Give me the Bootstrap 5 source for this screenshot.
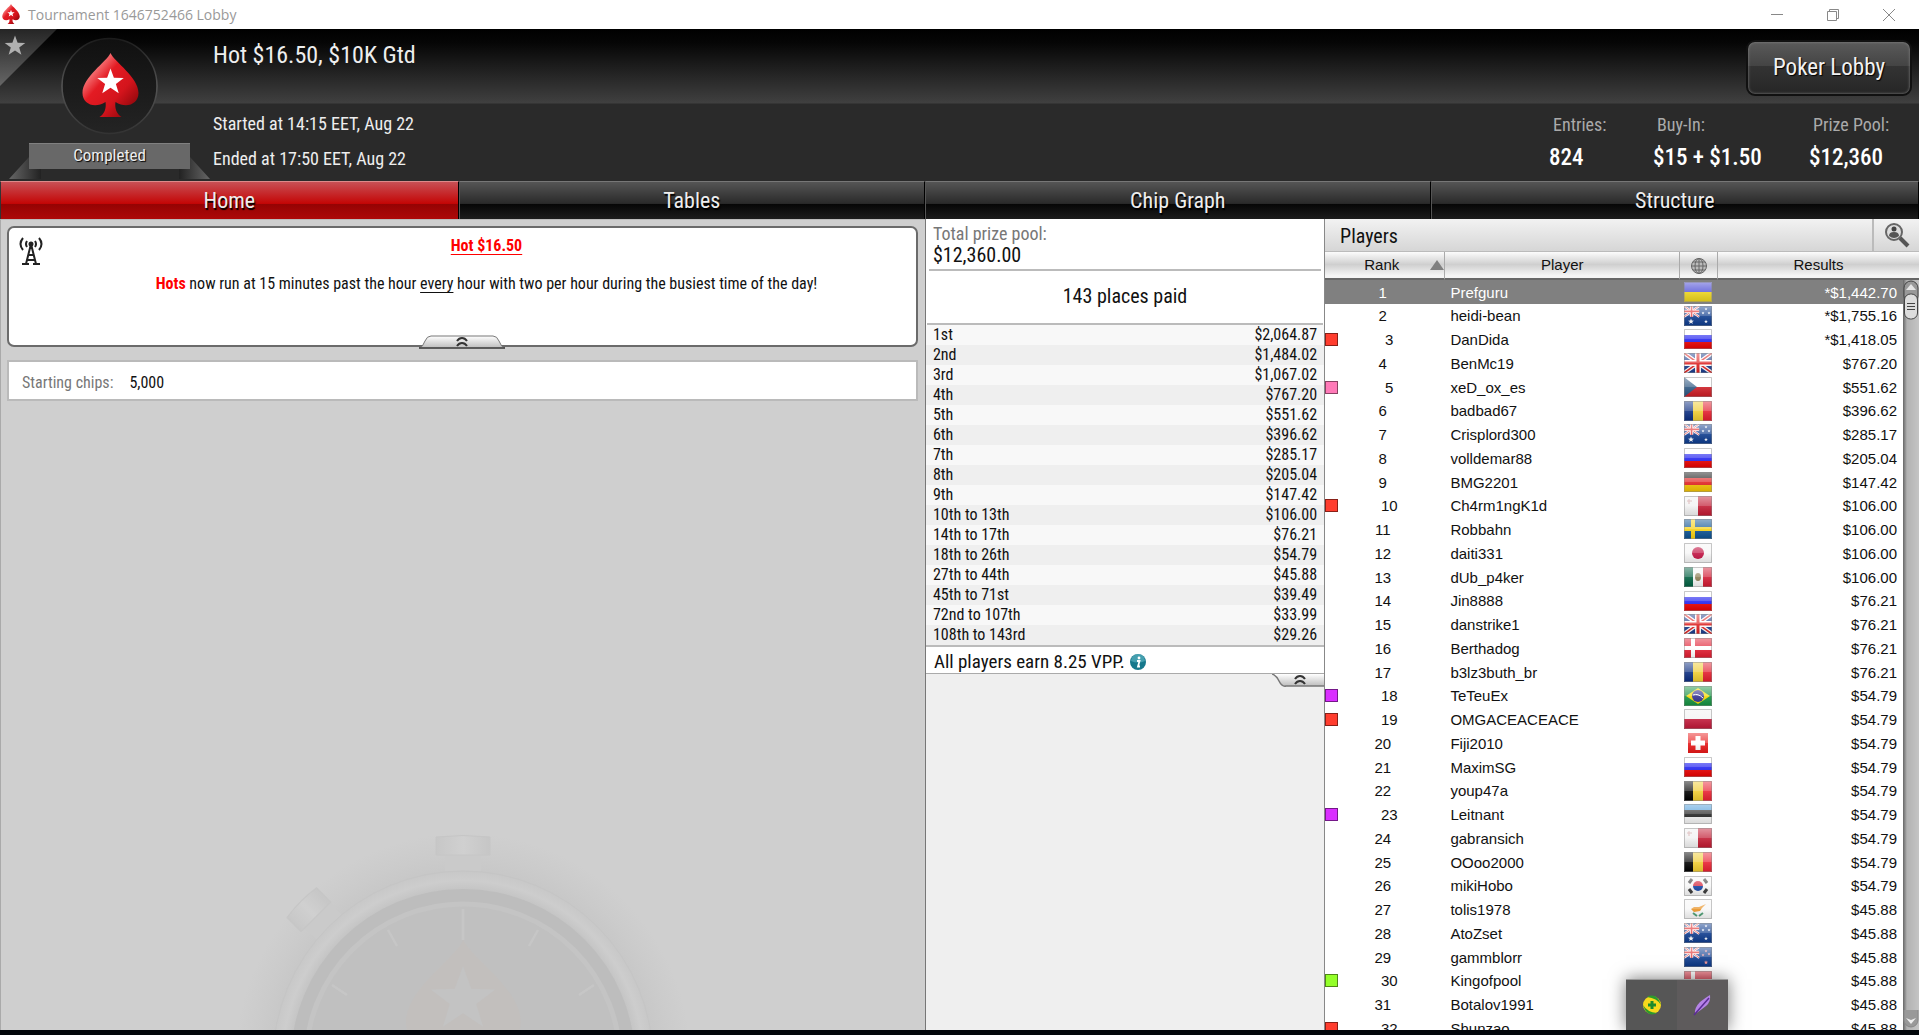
<!DOCTYPE html>
<html lang="en">
<head>
<meta charset="utf-8">
<meta name="viewport" content="width=device-width, initial-scale=1">
<title>Tournament 1646752466 Lobby</title>
<link rel="stylesheet" href="https://cdn.jsdelivr.net/npm/bootstrap@5.3.0/dist/css/bootstrap.min.css">
<style>
  :root { --narrow: "Roboto Condensed", "Liberation Sans Narrow", "DejaVu Sans Condensed", sans-serif; }
  body { font-family: var(--narrow); background: #000; color: #111; line-height: 20px; }
  a { color: inherit; text-decoration: none; }
  /* window title bar */
  .titlebar { height: 29px; background: #fff; font: 14px/29px "Open Sans", sans-serif; color: #999; padding: 0 2px; }
  .titlebar button { width: 56px; height: 29px; background: none; border: 0; padding: 0; display: flex; align-items: center; justify-content: center; }
  /* tournament header */
  .lobby-head { height: 152px; background: linear-gradient(#000 0, #060606 14px, #404040 74px, #2a2a2a 75px, #2a2a2a 100%); color: #eee; }
  .emblem { width: 213px; }
  .ribbon-text { left: 29px; top: 113px; width: 161px; font-size: 17px; line-height: 26px; text-shadow: 1px 1px 1px #000; }
  .t-title { font-size: 24px; line-height: 30px; padding-top: 11px; }
  .t-times { font-size: 18px; line-height: 35px; padding-top: 36px; }
  .lobby-btn { width: 166px; height: 56px; margin: 11px 7px 0 0; border: 2px solid #111; border-radius: 9px; color: #f2f2f2; font-size: 23px; text-shadow: 1px 1px 1px #000;
    background: linear-gradient(#5a5a5a 0, #444 46%, #333 47%, #262626 100%); box-shadow: inset 0 0 3px #888; }
  .facts { display: grid; grid-template-columns: 104px 156px 110px; font-size: 18px; line-height: 33px; padding-top: 12px; }
  .facts dt { font-weight: 400; color: #aaa; padding-left: 4px; }
  .facts dd { margin: 0; color: #fff; font-size: 23px; font-weight: 500; }
  /* tabs */
  .tabs { height: 38px; }
  .tabs a { text-align: center; font-size: 22px; line-height: 38px; color: #eee; text-shadow: 1px 2px 1px #000; border-left: 1px solid #555; border-top: 1px solid #777;
    background: linear-gradient(#555 0, #2a2a2a 58%, #060606 60%, #1c1c1c 100%); border-right: 1px solid #000; }
  .tabs a.active { background: linear-gradient(#c85055 0, #c40606 58%, #950303 60%, #ad0808 100%); border-top-color: #dd8a8a; border-left-color: #333; }
  .w-left { width: 48.2%; } .w-mid { width: 20.85%; }
  .tab-a { width: 23.9%; } .tab-b { width: 24.3%; } .tab-c { width: 26.35%; }
  /* left pane */
  .pane-left { background: #cfcfcf; border-left: 1px solid #aaa; border-top: 1px solid #bbb; padding: 6px 7px 6px 6px; overflow: hidden; }
  .news { height: 121px; background: #fff; border: 2px solid #6b6b6b; border-radius: 7px; font-size: 16px; }
  .news .copy { padding: 8px 0 0 48px; text-align: center; }
  .news .copy p { margin: 0 0 18px; }
  .hot { color: #f00; font-weight: 700; }
  .hot-u, .ev { text-decoration: underline; text-underline-offset: 3px; }
  .pull { border: 0; padding: 0; background: none; display: block; line-height: 0; }
  .news .pull { left: 50%; bottom: -4px; margin-left: -44px; }
  .chips { height: 41px; margin-top: 13px; border: 2px solid #bababa; background: #fff; font-size: 16px; padding: 5px 13px 0; color: #777; }
  .chips span { color: #111; }
  .watch { left: 50%; bottom: 0; margin-left: -230px; }
  /* prize pane */
  .pane-mid { background: #efefef; border-left: 1px solid #777; border-right: 1px solid #888; }
  .prize { background: #fff; border-bottom: 1px solid #aaa; }
  .pool { padding: 5px 4px 3px; font-size: 18px; color: #777; margin: 0 3px; border-bottom: 2px solid #bbb; line-height: 20px; }
  .pool strong { display: block; font-weight: 400; font-size: 20px; color: #111; line-height: 22px; }
  .paid { height: 54px; line-height: 51px; font-size: 20px; text-align: center; margin: 0 1px; border-bottom: 2px solid #bbb; }
  .pay-table { width: 100%; border-bottom: 2px solid #bbb; border-collapse: separate; border-spacing: 0; font-size: 16px; }
  .pay-table th, .pay-table td { height: 20px; line-height: 20px; padding: 0 7px; font-weight: 400; }
  .pay-table tr { background: #f8f8f8; }
  .pay-table tr:nth-child(even) { background: #efefef; }
  .vpp { height: 26px; font-size: 19px; line-height: 29px; padding-left: 8px; }
  .vpp svg { margin: 6px 0 0 4px; }
  /* players pane */
  .pane-right { width: 0; background: #fff; overflow: hidden; }
  .players-bar { height: 33px; background: linear-gradient(#f2f2f2, #d6d6d6); border-bottom: 1px solid #bbb; }
  .players-bar h2 { font: 20px/34px var(--narrow); padding-left: 15px; margin: 0; }
  .find { width: 47px; border: 0; border-left: 2px solid #bbb; background: none; padding: 0; }
  .list { width: 100%; table-layout: fixed; border-collapse: separate; border-spacing: 0; font-family: "Liberation Sans", sans-serif; font-size: 15px; }
  .list th { height: 28px; padding: 0; font-weight: 400; text-align: center; border-left: 1px solid #aaa; border-bottom: 2px solid #666;
    background: linear-gradient(#fcfcfc 0, #cfcfcf 48%, #f4f4f4 90%); }
  .list th:first-child { border-left: 0; }
  .list td { padding: 0; height: 24px; line-height: 23px; overflow: hidden; white-space: nowrap; }
  .list tr:nth-child(4n+2) td { height: 23px; }
  .list td:nth-child(1) { padding-right: 4px; }
  .list td:nth-child(2) { padding-left: 6px; }
  .list td:nth-child(3) { text-align: center; line-height: 0; }
  .list td:nth-child(4) { text-align: right; padding-right: 22px; }
  .list .picked td { background: #808080; color: #fff; }
  .tag { width: 13px; height: 13px; border: 1px solid #0007; }
  .scroll { top: 61px; right: 0; bottom: 0; width: 16px; background: linear-gradient(90deg, #666 0, #b2b2b2 25%, #c4c4c4 100%); }
  /* floating tray */
  .tray { right: 191px; bottom: 5px; width: 102px; height: 51px; background: #565656; border-top: 1px solid #999; box-shadow: 0 0 16px #0008; }
  .tray span:last-child { background: #5e5b5c; }
  .base { height: 5px; background: #02060a; }
</style>
<script src="https://cdn.jsdelivr.net/npm/bootstrap@5.3.0/dist/js/bootstrap.bundle.min.js"></script>
</head>
<body class="vh-100 overflow-hidden d-flex flex-column">

<svg width="0" height="0" class="position-absolute" aria-hidden="true">
  <defs>
    <linearGradient id="red" x1="0" y1="0" x2="1" y2="1"><stop offset=".15" stop-color="#ffa0a0"/><stop offset=".4" stop-color="#e31b23"/><stop offset=".65" stop-color="#d4141c"/><stop offset=".95" stop-color="#7d0408"/></linearGradient>
    <linearGradient id="gloss" x1="0" y1="0" x2="0" y2="1"><stop offset="0" stop-color="#fff" stop-opacity=".55"/><stop offset=".48" stop-color="#fff" stop-opacity=".3"/><stop offset=".52" stop-color="#fff" stop-opacity=".12"/><stop offset="1" stop-color="#000" stop-opacity=".1"/></linearGradient>
    <linearGradient id="tabg" x1="0" y1="0" x2="0" y2="1"><stop offset="0" stop-color="#fff"/><stop offset="1" stop-color="#bcbcbc"/></linearGradient>
    <g id="spade"><path d="M28 0C32 9 56 24 56 40C56 51 44 56 33 49C32 55 34 61 39 64H17C22 61 24 55 23 49C12 56 0 51 0 40C0 24 24 9 28 0Z"/></g>
    <path id="star" d="M0-10 2.5-3.1 9.8-2.9 4 1.5 6.1 8.4 0 4.3-6.1 8.4-4 1.5-9.8-2.9-2.5-3.1Z"/>
    <g id="chev" fill="none" stroke="#333" stroke-width="2"><path d="M-5-1Q-3-4 0-4T5-1M-5 4Q-3 1 0 1T5 4"/></g>
    <g id="jack"><path fill="#1a3c8c" d="M0 0h28v20H0z"/><path stroke="#fff" stroke-width="4" d="M0 0 28 20M28 0 0 20"/><path stroke="#d22" stroke-width="1.5" d="M0 0 28 20M28 0 0 20"/><path stroke="#fff" stroke-width="6" d="M14 0v20M0 10h28"/><path stroke="#d22" stroke-width="3" d="M14 0v20M0 10h28"/></g>
    <g id="f-ua"><path fill="#3a3ad0" d="M0 0h28v10H0z"/><path fill="#ead21c" d="M0 10h28v10H0z"/></g>
    <g id="f-ru"><path fill="#fff" d="M0 0h28v7H0z"/><path fill="#2222f0" d="M0 6h28v8H0z"/><path fill="#e80000" d="M0 13h28v7H0z"/></g>
    <g id="f-au"><path fill="#0c3a8c" d="M0 0h28v20H0z"/><use href="#jack" transform="scale(.54)"/><g fill="#fff"><use href="#star" transform="translate(7 15.500) scale(.3)"/><use href="#star" transform="translate(22 15.500) scale(.2)"/><use href="#star" transform="translate(22 3) scale(.15)"/><use href="#star" transform="translate(19 7) scale(.15)"/><use href="#star" transform="translate(25 7) scale(.15)"/></g></g>
    <g id="f-nz"><path fill="#0c3a8c" d="M0 0h28v20H0z"/><use href="#jack" transform="scale(.54)"/><g fill="#f99"><use href="#star" transform="translate(22 15.500) scale(.22)"/><use href="#star" transform="translate(22 4) scale(.15)"/><use href="#star" transform="translate(19 8) scale(.15)"/><use href="#star" transform="translate(25 7) scale(.15)"/></g></g>
    <g id="f-gb"><use href="#jack"/></g>
    <g id="f-cz"><path fill="#fff" d="M0 0h28v10H0z"/><path fill="#cc1c24" d="M0 10h28v10H0z"/><path fill="#2b5580" d="m0 0 13 10L0 20z"/></g>
    <g id="f-ro"><path fill="#0a2c80" d="M0 0h9v20H0z"/><path fill="#f0cc30" d="M9 0h10v20H9z"/><path fill="#e21c2c" d="M19 0h9v20h-9z"/></g>
    <g id="f-be"><path d="M0 0h9v20H0z"/><path fill="#f0cc30" d="M9 0h10v20H9z"/><path fill="#e82030" d="M19 0h9v20h-9z"/></g>
    <g id="f-de"><path fill="#111" d="M0 0h28v7H0z"/><path fill="#e02020" d="M0 6h28v8H0z"/><path fill="#f0c000" d="M0 13h28v7H0z"/></g>
    <g id="f-mt"><path fill="#f0f0f0" d="M0 0h14v20H0z"/><path fill="#c01830" d="M14 0h14v20H14z"/><path stroke="#c99" stroke-width="1" d="M5 3v5M3 5h5"/></g>
    <g id="f-se"><path fill="#0a5090" d="M0 0h28v20H0z"/><path stroke="#f5d010" stroke-width="4" d="M9 0v20M0 10h28"/></g>
    <g id="f-jp"><path fill="#f5f5f5" d="M0 0h28v20H0z"/><circle cx="14" cy="10" r="6" fill="#c01040"/></g>
    <g id="f-mx"><path fill="#006040" d="M0 0h9v20H0z"/><path fill="#f4f4f4" d="M9 0h10v20H9z"/><path fill="#d01830" d="M19 0h9v20h-9z"/><ellipse cx="14" cy="10" rx="3" ry="4" fill="#8a7a50"/></g>
    <g id="f-dk"><path fill="#e01c30" d="M0 0h28v20H0z"/><path stroke="#fff" stroke-width="4" d="M9 0v20M0 10h28"/></g>
    <g id="f-br"><path fill="#149040" d="M0 0h28v20H0z"/><path fill="#f5d800" d="m14 2 12 8-12 8L2 10z"/><circle cx="14" cy="10" r="6" fill="#303090"/><path d="M9 9q5-2 10 3" stroke="#fff" fill="none"/></g>
    <g id="f-pl"><path fill="#f2f2f2" d="M0 0h28v10H0z"/><path fill="#c01838" d="M0 10h28v10H0z"/></g>
    <g id="f-ee"><path fill="#4a9ad8" d="M0 0h28v7H0z"/><path fill="#222" d="M0 6h28v8H0z"/><path fill="#f0f0f0" d="M0 13h28v7H0z"/></g>
    <g id="f-kr"><path fill="#f5f5f5" d="M0 0h28v20H0z"/><path fill="#d01830" d="M9 10a5 5 0 0 1 10 0z"/><path fill="#1040a0" d="M9 10a5 5 0 0 0 10 0z"/><path stroke="#333" stroke-width="3" d="m5 7 3-4M5 13l3 4M23 7l-3-4M23 13l-3 4"/></g>
    <g id="f-cy"><path fill="#f6f6f6" d="M0 0h28v20H0z"/><path fill="#e89020" d="M7 10 10 8l5 0 7-3-4 4-2 3-6 1z"/><path stroke="#4a9a70" stroke-width="2" fill="none" d="M9 14l4 3M19 14l-4 3"/></g>
  </defs>
</svg>

<header>
  <div class="titlebar d-flex">
    <svg width="18" height="20" class="mt-1 me-1 align-self-start" viewBox="0 0 56 64" aria-hidden="true"><use href="#spade" fill="url(#red)"/><use href="#star" fill="#fff" transform="translate(28 30) scale(1.200)"/></svg>
    <span class="flex-grow-1 ps-1">Tournament 1646752466 Lobby</span>
    <button aria-label="Minimize"><svg width="12" height="12"><path d="M0 5.500h12" stroke="#888"/></svg></button>
    <button aria-label="Restore"><svg width="12" height="12" fill="none" stroke="#888"><path d="M.5 2.500h9v9h-9zM2.500 2V.5h9v9H10"/></svg></button>
    <button aria-label="Close"><svg width="12" height="12"><path d="m0 0 12 12M12 0 0 12" stroke="#888"/></svg></button>
  </div>

  <div class="lobby-head d-flex">
    <div class="emblem position-relative">
      <svg width="213" height="152" aria-hidden="true">
        <defs>
          <linearGradient id="corner" x1="0" y1="0" x2="0" y2="1"><stop offset="0" stop-color="#252525"/><stop offset="1" stop-color="#666"/></linearGradient>
          <linearGradient id="disc" x1="0" y1="0" x2="0" y2="1"><stop offset="0" stop-color="#101010"/><stop offset="1" stop-color="#242424"/></linearGradient>
          <linearGradient id="ring" x1="0" y1="0" x2="0" y2="1"><stop offset="0" stop-color="#1c1c1c"/><stop offset=".5" stop-color="#555"/><stop offset="1" stop-color="#333"/></linearGradient>
          <linearGradient id="fold" x1="0" y1="0" x2="1" y2="0"><stop offset="0" stop-color="#666"/><stop offset="1" stop-color="#222"/></linearGradient>
          <linearGradient id="fold2" x1="1" y1="0" x2="0" y2="0"><stop offset="0" stop-color="#666"/><stop offset="1" stop-color="#222"/></linearGradient>
        </defs>
        <path d="M0 0h57L0 57z" fill="url(#corner)"/>
        <use href="#star" fill="#b0b0b0" transform="translate(15 17) scale(1.050)"/>
        <circle cx="109.500" cy="57" r="47.500" fill="url(#disc)" stroke="url(#ring)" stroke-width="1.500"/>
        <use href="#spade" fill="url(#red)" transform="translate(82.500 24)"/>
        <use href="#star" fill="#fff" transform="translate(110.500 53) scale(1.350)"/>
        <path d="M29 128v12h12v10H9z" fill="url(#fold)"/><path d="M190 128v12h-11v10h31z" fill="url(#fold2)"/>
        <path d="M29 114h161v26H29z" fill="#686868"/><path d="M29 114.500h161" stroke="#808080"/>
      </svg>
      <span class="ribbon-text position-absolute text-center">Completed</span>
    </div>
    <div class="flex-grow-1">
      <div class="t-title">Hot $16.50, $10K Gtd</div>
      <div class="t-times">Started at 14:15 EET, Aug 22<br>Ended at 17:50 EET, Aug 22</div>
    </div>
    <div class="d-flex flex-column align-items-end">
      <button class="lobby-btn">Poker Lobby</button>
      <div class="facts">
        <dl class="m-0"><dt>Entries:</dt><dd>824</dd></dl>
        <dl class="m-0"><dt>Buy-In:</dt><dd>$15 + $1.50</dd></dl>
        <dl class="m-0"><dt>Prize Pool:</dt><dd>$12,360</dd></dl>
      </div>
    </div>
  </div>

  <nav class="tabs d-flex">
    <a class="tab-a active" href="#home">Home</a>
    <a class="tab-b" href="#tables">Tables</a>
    <a class="tab-c" href="#chips">Chip Graph</a>
    <a class="flex-grow-1" href="#structure">Structure</a>
  </nav>
</header>

<main class="d-flex flex-grow-1 overflow-hidden">
  <section class="pane-left w-left position-relative">
    <svg class="watch position-absolute" width="460" height="220" aria-hidden="true">
      <defs>
        <radialGradient id="halo"><stop offset=".8" stop-color="#c6c6c6"/><stop offset=".9" stop-color="#cbcbcb"/><stop offset="1" stop-color="#cfcfcf"/></radialGradient>
        <radialGradient id="rim"><stop offset=".9" stop-color="#c4c4c4"/><stop offset=".95" stop-color="#cdcdcd"/><stop offset="1" stop-color="#c8c8c8"/></radialGradient>
        <linearGradient id="knob"><stop offset="0" stop-color="#c7c7c7"/><stop offset=".5" stop-color="#d0d0d0"/><stop offset="1" stop-color="#c6c6c6"/></linearGradient>
      </defs>
      <circle cx="230" cy="251" r="228" fill="url(#halo)"/>
      <path d="M212 42h36v20h-36z" fill="#cacaca"/><path d="M203 27q27-3 54 0v18h-54z" fill="url(#knob)" stroke="#c6c6c6"/>
      <g transform="rotate(-45 230 251)"><path d="M212 42h36v22h-36z" fill="#cacaca"/><path d="M207 25q23-3 42 0v20h-42z" fill="url(#knob)" stroke="#c6c6c6"/></g>
      <circle cx="230" cy="251" r="190" fill="url(#rim)" stroke="#c5c5c5"/>
      <circle cx="230" cy="251" r="172" fill="#bdbdbd"/>
      <circle cx="230" cy="251" r="157" fill="#c0c0c0" stroke="#c4c4c4" stroke-width="5"/>
      <path d="M230 99v31M155 120l9 16M305 120l-9 16M99 175l15 10M361 175l-15 10" stroke="#c6c6c6" stroke-width="2.500"/>
      <use href="#spade" fill="#c2bfbd" transform="translate(173 130) scale(2.050)"/>
      <use href="#star" fill="#c3c3c3" transform="translate(230 189) scale(3.300)"/>
    </svg>
    <div class="news position-relative">
      <svg class="position-absolute top-0 start-0 ms-2 mt-2" width="28" height="30" fill="none" stroke="#222" stroke-width="2" aria-hidden="true">
        <path d="M14 8 9 28M14 8l5 20M11 19h6M10 24h8M5 28h7M16 28h7"/><circle cx="14" cy="8" r="1.500" fill="#222"/>
        <path d="M10 5q-2 3 0 6M18 5q2 3 0 6M6 2q-5 6 0 12M22 2q5 6 0 12"/>
      </svg>
      <div class="copy">
        <p><a class="hot hot-u" href="#hot">Hot $16.50</a></p>
        <p><span class="hot">Hots</span> now run at 15 minutes past the hour <span class="ev">every</span> hour with two per hour during the busiest time of the day!</p>
      </div>
      <button class="pull position-absolute" aria-label="Collapse news"><svg width="88" height="14"><path d="M1 13Q5 12 7 6 9 1 13 1H75Q79 1 81 6 83 12 87 13Z" fill="url(#tabg)" stroke="#777"/><path d="M1 13h86" stroke="#444" stroke-width="1.500"/><use href="#chev" x="44" y="7"/></svg></button>
    </div>
    <div class="chips position-relative d-flex align-items-center">Starting chips: <span class="ms-3">5,000</span></div>
  </section>

  <section class="pane-mid w-mid">
    <div class="prize">
      <div class="pool">Total prize pool:<strong>$12,360.00</strong></div>
      <div class="paid">143 places paid</div>
      <table class="pay-table"><tbody id="pay"></tbody></table>
      <div class="vpp d-flex">All players earn 8.25 VPP.
        <svg width="18" height="18" aria-hidden="true"><circle cx="9" cy="9" r="8" fill="#16788c"/><path d="M2 8a7 7 0 0 1 14 0q-7 3-14 0" fill="#6cc0cc" opacity=".55"/><circle cx="10" cy="5" r="1.400" fill="#fff"/><path d="M8 8h2.500l-1.500 5.500h2" stroke="#fff" stroke-width="1.800" fill="none"/></svg>
      </div>
    </div>
    <button class="pull ms-auto" aria-label="Collapse prizes"><svg width="52" height="14"><path d="M0 0Q4 1 7 7T14 12H52V0Z" fill="url(#tabg)"/><path d="M0 0Q4 1 7 7T14 12H52" fill="none" stroke="#777" stroke-width="1.500"/><use href="#chev" x="28" y="6"/></svg></button>
  </section>

  <section class="pane-right flex-grow-1 position-relative">
    <div class="players-bar d-flex justify-content-between">
      <h2>Players</h2>
      <button class="find" aria-label="Find player"><svg width="26" height="26"><circle cx="10" cy="10" r="8" fill="#ddd" stroke="#666" stroke-width="2"/><path d="m16 16 8 8" stroke="#555" stroke-width="4"/><circle cx="10" cy="7" r="2.500" fill="#444"/><path d="M5 14q0-4 5-4t5 4q-5 4-10 0" fill="#555"/></svg></button>
    </div>
    <table class="list">
      <colgroup><col style="width:20.100%"><col style="width:39.500%"><col style="width:6.400%"><col></colgroup>
      <thead><tr>
        <th scope="col"><div class="d-flex align-items-center ps-2"><span class="flex-grow-1">Rank</span><svg width="14" height="10"><path d="M7 0l7 10H0z" fill="#808080"/></svg></div></th>
        <th scope="col">Player</th>
        <th scope="col" aria-label="Country"><svg width="18" height="18" fill="none" stroke="#666"><circle cx="9" cy="9" r="7.500" fill="#bbb"/><path d="M9 1v16M1 9h16M3 5h12M3 13h12"/><ellipse cx="9" cy="9" rx="4" ry="7.500"/></svg></th>
        <th scope="col">Results</th>
      </tr></thead>
      <tbody id="players"></tbody>
    </table>
    <div class="scroll position-absolute">
      <svg class="position-absolute top-0 start-0" width="16" height="42" aria-hidden="true"><rect x="1" y="1" width="14" height="22" rx="7" fill="#999" stroke="#444"/><path d="m8 4 5 6H3z" fill="#e5e5e5"/><rect x="1.500" y="14" width="13" height="25" rx="6" fill="#ddd" stroke="#444"/><path d="M4 23.500h8M4 26.500h8M4 29.500h8" stroke="#444"/></svg>
      <svg class="position-absolute bottom-0 start-0" width="16" height="20" aria-hidden="true"><path d="M1 0v10a7 7 0 0 0 14 0V0" fill="#999" stroke="#888"/><path d="M3 8l5 6 5-6-5 2z" fill="#eee"/></svg>
    </div>
  </section>
</main>
<footer class="base"></footer>

<div class="tray position-fixed d-flex">
  <span class="w-50 d-flex align-items-center justify-content-center"><svg width="22" height="22"><circle cx="11" cy="11" r="9" fill="#f7d91c"/><path d="M6 3q7-4 12 3l2 5q-4-7-14-8M16 19q-7 4-12-3l-2-5q4 7 14 8" fill="#2c9a2c"/><path d="M11 7v8M7 11h8" stroke="#1c8a2c" stroke-width="3"/></svg></span>
  <span class="w-50 d-flex align-items-center justify-content-center"><svg width="20" height="22"><path d="M2 20Q1 14 7 8 12 4 17 1 18 8 13 12 8 16 2 20Z" fill="#b583e8"/><path d="M1 21 16 4" stroke="#5a2a94" stroke-width="1.500"/></svg></span>
</div>

<script>
  const pays = [["1st","2,064.87"],["2nd","1,484.02"],["3rd","1,067.02"],["4th","767.20"],["5th","551.62"],["6th","396.62"],["7th","285.17"],["8th","205.04"],["9th","147.42"],["10th to 13th","106.00"],["14th to 17th","76.21"],["18th to 26th","54.79"],["27th to 44th","45.88"],["45th to 71st","39.49"],["72nd to 107th","33.99"],["108th to 143rd","29.26"]];
  document.getElementById("pay").innerHTML = pays.map(([place, sum]) => `<tr><th scope="row">${place}</th><td class="text-end">$${sum}</td></tr>`).join("");

  const red = "#ff3d2e", pink = "#ff7ab8", violet = "#d92eff", green = "#94ff29";
  const players = [["Prefguru","ua","*$1,442.70"],["heidi-bean","au","*$1,755.16"],["DanDida","ru","*$1,418.05",red],["BenMc19","gb","$767.20"],["xeD_ox_es","cz","$551.62",pink],["badbad67","ro","$396.62"],["Crisplord300","au","$285.17"],["volldemar88","ru","$205.04"],["BMG2201","de","$147.42"],["Ch4rm1ngK1d","mt","$106.00",red],["Robbahn","se","$106.00"],["daiti331","jp","$106.00"],["dUb_p4ker","mx","$106.00"],["Jin8888","ru","$76.21"],["danstrike1","gb","$76.21"],["Berthadog","dk","$76.21"],["b3lz3buth_br","ro","$76.21"],["TeTeuEx","br","$54.79",violet],["OMGACEACEACE","pl","$54.79",red],["Fiji2010","ch","$54.79"],["MaximSG","ru","$54.79"],["youp47a","be","$54.79"],["Leitnant","ee","$54.79",violet],["gabransich","mt","$54.79"],["OOoo2000","be","$54.79"],["mikiHobo","kr","$54.79"],["tolis1978","cy","$45.88"],["AtoZset","au","$45.88"],["gammblorr","nz","$45.88"],["Kingofpool","dk","$45.88",green],["Botalov1991","ru","$45.88"],["Shunzao","se","$45.88",red]];
  const flag = c => c === "ch"
    ? `<svg width="28" height="20"><path fill="#e81818" d="M4 0h20v20H4z"/><path stroke="#fff" stroke-width="5" d="M14 3v14M7 10h14"/><path d="M4 0h20v20H4z" fill="url(#gloss)"/></svg>`
    : `<svg width="28" height="20"><use href="#f-${c}"/><path d="M0 0h28v20H0z" fill="url(#gloss)"/><path d="M.5.5h27v19H.5z" fill="none" stroke="#888" stroke-opacity=".45"/></svg>`;
  document.getElementById("players").innerHTML = players.map(([name, c, sum, tag], i) =>
    `<tr class="${i ? "" : "picked"}"><td><div class="d-flex align-items-center">${tag ? `<span class="tag" style="background:${tag}"></span>` : ""}<span class="flex-grow-1 text-center">${i + 1}</span></div></td><td>${name}</td><td>${flag(c)}</td><td>${sum}</td></tr>`).join("");
</script>
</body>
</html>
